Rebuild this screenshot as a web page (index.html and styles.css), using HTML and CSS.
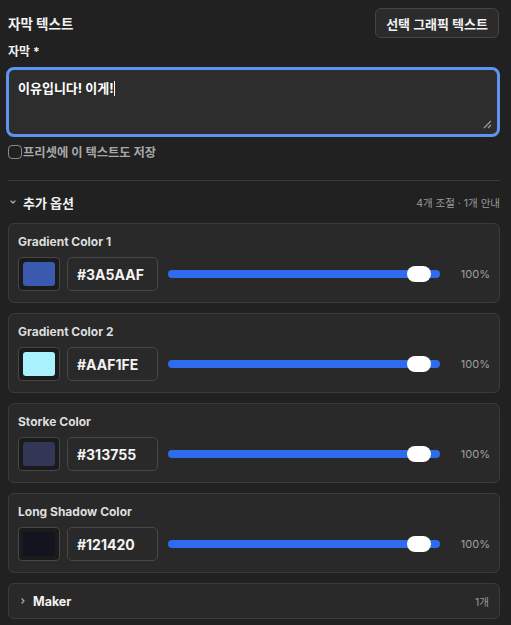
FILE: index.html
```html
<!DOCTYPE html>
<html lang="ko">
<head>
  <meta charset="UTF-8" />
  <meta name="viewport" content="width=device-width, initial-scale=1.0" />
  <title>자막 텍스트</title>
  <link rel="stylesheet" href="styles.css">
</head>
<body>
  <div class="panel">
    <div class="top-row">
      <h1>자막 텍스트</h1>
      <button class="pick-btn">선택 그래픽 텍스트</button>
    </div>

    <div class="field-label">자막 *</div>
    <div class="textarea-wrap">
      <div class="textarea">이유입니다! 이게!<span class="caret"></span></div>
      <svg class="grip" width="10" height="10" viewBox="0 0 10 10"><path d="M9 2 L2 9 M9 6 L6 9" stroke="#9a9a9a" stroke-width="1.2" fill="none"/></svg>
    </div>

    <label class="save-check">
      <span class="box"></span>
      <span>프리셋에 이 텍스트도 저장</span>
    </label>

    <div class="divider"></div>

    <div class="section-head">
      <div class="sh-left">
        <svg class="chev" width="6" height="6" viewBox="0 0 6 6"><path d="M1 2 L3 4 L5 2" stroke="#aaa" stroke-width="1.3" fill="none" stroke-linecap="round" stroke-linejoin="round"/></svg>
        <span class="sh-title">추가 옵션</span>
      </div>
      <span class="sh-meta">4개 조절 · 1개 안내</span>
    </div>

    <div class="card">
      <div class="card-label">Gradient Color 1</div>
      <div class="color-row">
        <div class="swatch"><div class="chip" style="background:#3A5AAF"></div></div>
        <div class="hex">#3A5AAF</div>
        <div class="slider"><div class="track"></div><div class="thumb"></div></div>
        <div class="pct">100%</div>
      </div>
    </div>

    <div class="card">
      <div class="card-label">Gradient Color 2</div>
      <div class="color-row">
        <div class="swatch"><div class="chip" style="background:#AAF1FE"></div></div>
        <div class="hex">#AAF1FE</div>
        <div class="slider"><div class="track"></div><div class="thumb"></div></div>
        <div class="pct">100%</div>
      </div>
    </div>

    <div class="card">
      <div class="card-label">Storke Color</div>
      <div class="color-row">
        <div class="swatch"><div class="chip" style="background:#313755"></div></div>
        <div class="hex">#313755</div>
        <div class="slider"><div class="track"></div><div class="thumb"></div></div>
        <div class="pct">100%</div>
      </div>
    </div>

    <div class="card">
      <div class="card-label">Long Shadow Color</div>
      <div class="color-row">
        <div class="swatch"><div class="chip" style="background:#121420"></div></div>
        <div class="hex">#121420</div>
        <div class="slider"><div class="track"></div><div class="thumb"></div></div>
        <div class="pct">100%</div>
      </div>
    </div>

    <div class="card collapsed">
      <div class="sh-left">
        <svg class="chev" width="6" height="6" viewBox="0 0 6 6"><path d="M2 1 L4 3 L2 5" stroke="#aaa" stroke-width="1.3" fill="none" stroke-linecap="round" stroke-linejoin="round"/></svg>
        <span class="maker-title">Maker</span>
      </div>
      <span class="sh-meta">1개</span>
    </div>
  </div>
</body>
</html>
```

FILE: styles.css
```css
html, body {
  margin: 0;
  padding: 0;
  background: #212121;
  color: #fff;
  font-family: Inter, "Noto Sans CJK KR", sans-serif;
}
.panel {
  padding: 8px 11px 0 8px;
  display: flex;
  flex-direction: column;
}
.top-row {
  display: flex;
  justify-content: space-between;
  align-items: center;
  height: 30px;
}
.top-row h1 {
  margin: 0;
  font-size: 13.5px;
  font-weight: 700;
  color: #f2f2f2;
}
.pick-btn {
  height: 30px;
  padding: 0 10px;
  background: #2b2b2b;
  border: 1px solid #454545;
  border-radius: 6px;
  color: #f0f0f0;
  font-family: inherit;
  font-size: 13px;
  font-weight: 700;
  margin-right: 1px;
}
.field-label {
  margin-top: 6px;
  font-size: 12px;
  font-weight: 700;
  color: #f2f2f2;
  line-height: 16px;
}
.textarea-wrap {
  position: relative;
  margin: 7px 0 0 -2px;
  height: 64px;
  border: 3px solid #5f93f0;
  border-radius: 8px;
  background: #2d2d2d;
}
.textarea {
  padding: 9px 9px;
  font-size: 13px;
  font-weight: 700;
  color: #fff;
  line-height: 18px;
}
.caret {
  display: inline-block;
  width: 1px;
  height: 15px;
  background: #fff;
  vertical-align: -3px;
}
.grip {
  position: absolute;
  right: 5px;
  bottom: 5px;
}
.save-check {
  display: flex;
  align-items: center;
  margin-top: 6px;
  font-size: 12.3px;
  font-weight: 700;
  color: #a8a8a8;
  height: 18px;
}
.save-check .box {
  width: 12px;
  height: 12px;
  border: 1.5px solid #8a8a8a;
  border-radius: 4px;
  margin-right: 1px;
}
.divider {
  height: 1px;
  background: #3a3a3a;
  margin-top: 19px;
}
.section-head {
  display: flex;
  justify-content: space-between;
  align-items: center;
  height: 42px;
}
.sh-left {
  display: flex;
  align-items: center;
}
.section-head .chev {
  margin-left: 2px;
}
.sh-title {
  margin-left: 7px;
  font-size: 13px;
  font-weight: 700;
  color: #f2f2f2;
}
.sh-meta {
  font-size: 10.5px;
  color: #9a9a9a;
}
.card {
  background: #292929;
  border: 1px solid #3b3b3b;
  border-radius: 6px;
  padding: 10px 9px 11px 9px;
  margin-bottom: 10px;
}
.card-label {
  font-size: 12px;
  font-weight: 700;
  color: #dedede;
  line-height: 16px;
}
.color-row {
  display: flex;
  align-items: center;
  margin-top: 7px;
}
.swatch {
  width: 40px;
  height: 32px;
  border: 1px solid #474747;
  border-radius: 4px;
  background: #1b1b1b;
  display: flex;
  align-items: center;
  justify-content: center;
}
.chip {
  width: 32px;
  height: 24px;
  border-radius: 3px;
}
.hex {
  width: 80px;
  height: 32px;
  margin-left: 7px;
  border: 1px solid #474747;
  border-radius: 5px;
  padding-left: 9px;
  display: flex;
  align-items: center;
  font-size: 14px;
  font-weight: 700;
  color: #f4f4f4;
}
.slider {
  position: relative;
  flex: 1;
  margin-left: 10px;
  height: 16px;
  display: flex;
  align-items: center;
}
.track {
  width: 100%;
  height: 8px;
  border-radius: 4px;
  background: #2f6bef;
}
.thumb {
  position: absolute;
  right: 9px;
  top: 0;
  width: 24px;
  height: 16px;
  border-radius: 8px;
  background: #fff;
}
.pct {
  width: 50px;
  text-align: right;
  font-size: 11px;
  color: #a0a0a0;
}
.card.collapsed {
  display: flex;
  justify-content: space-between;
  align-items: center;
  height: 14px;
  padding: 10px 10px 10px 11px;
}
.maker-title {
  margin-left: 7px;
  font-size: 12.5px;
  font-weight: 700;
  color: #f2f2f2;
}
```
